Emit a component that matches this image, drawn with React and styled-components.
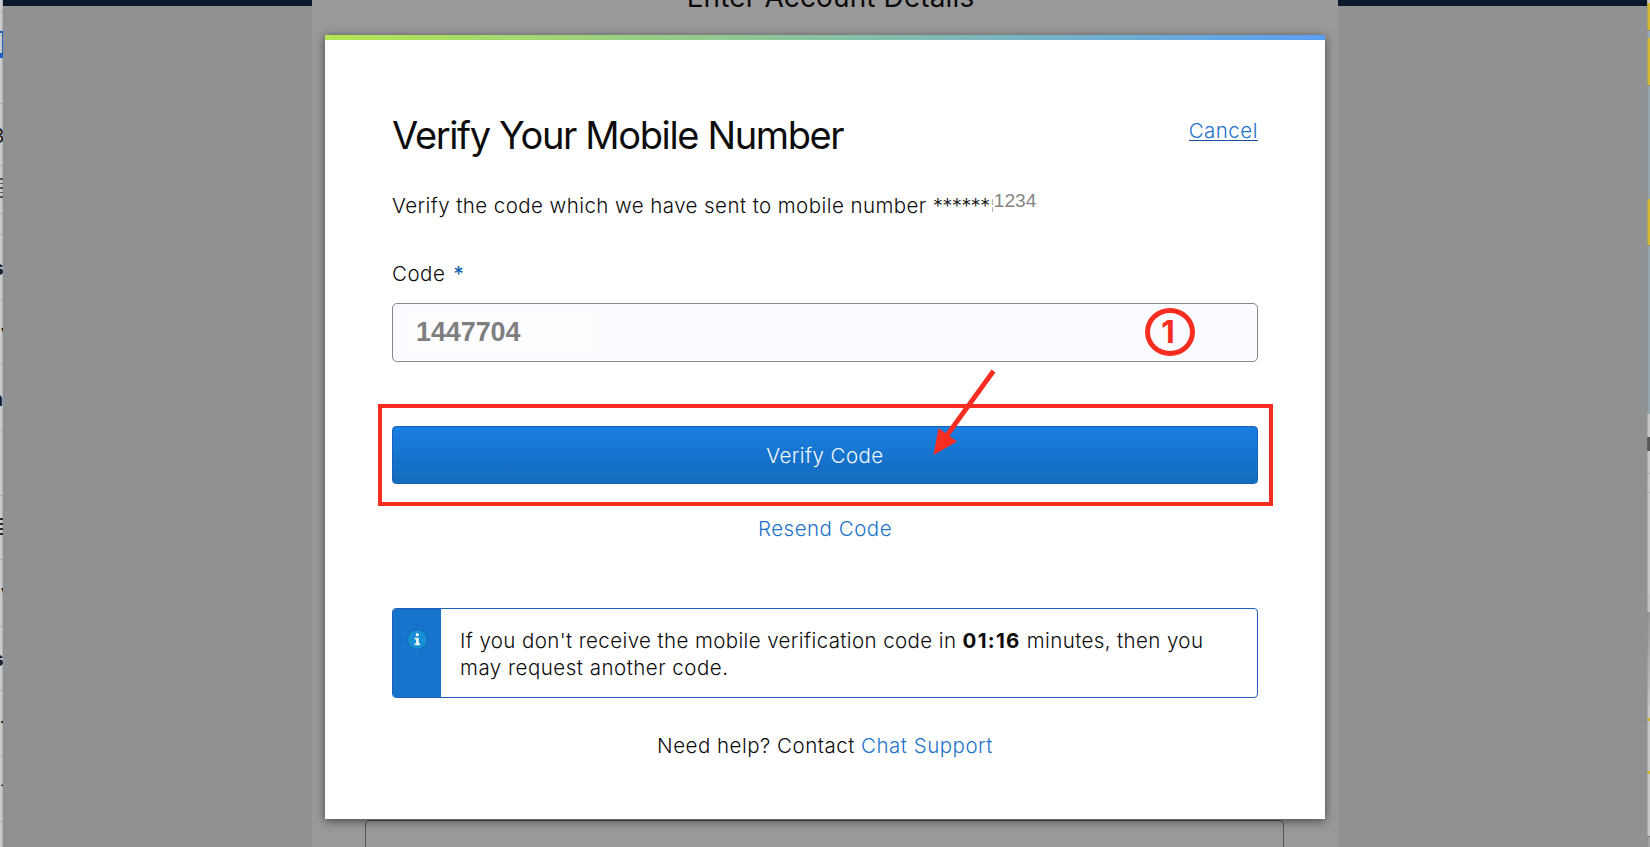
import React from "react";
import styled, { createGlobalStyle } from "styled-components";

const RED = "#f62d20";

const GlobalStyle = createGlobalStyle`
  * { box-sizing: border-box; }
  html, body { margin: 0; padding: 0; }
  body {
    font-family: Inter, "Noto Sans", sans-serif;
    overflow: hidden;
    background: #8f9192;
  }
`;

const Screen = styled.div`
  position: relative;
  display: grid;
  grid-template-columns: 3px 309px minmax(0, 1fr) 309px 3px;
  width: 1650px;
  height: 847px;
  overflow: hidden;
`;

const EdgeStrip = styled.div`
  display: flex;
  flex-direction: column;
  overflow: hidden;
  background: linear-gradient(to right, #c9cbcc 0 2px, #aeb0b2 2px 3px);
`;

const EdgeRow = styled.div`
  flex: none;
  height: ${(p) => p.$h}px;
  padding-top: ${(p) => p.$top || 0}px;
  overflow: hidden;
  border-bottom: 1px solid #a9abae;
  color: #1c1c1e;
  font-size: ${(p) => p.$size || 16}px;
  font-weight: ${(p) => p.$weight || 400};
  line-height: 20px;
  text-indent: ${(p) => p.$shift || 0}px;
  white-space: nowrap;
`;

const FocusedCell = styled.div`
  height: 27px;
  border: solid #1f5fc0;
  border-width: 2px 1px 5px 0;
`;

const ListLines = styled.div`
  height: 20px;
  background: repeating-linear-gradient(to bottom, ${(p) => p.$color} 0 ${(p) => p.$thick}px, transparent ${(p) => p.$thick}px ${(p) => p.$thick + 3}px);
`;

const EdgeSegment = styled.div`
  flex: none;
  height: ${(p) => p.$h}px;
  background: ${(p) => p.$color};
  border-left: 1px solid rgba(120, 125, 130, 0.35);
`;

const Margin = styled.div`
  background: #8f9192;
  border-top: 6px solid #0a182b;
`;

const Sheet = styled.div`
  display: flex;
  flex-direction: column;
  justify-content: space-between;
  align-items: center;
  background: #999;
  overflow: hidden;
`;

const SheetTitle = styled.h1`
  margin: -20px 0 0 11px;
  font-size: 28px;
  font-weight: 400;
  line-height: 34px;
  letter-spacing: 0.12px;
  color: #0b0b0b;
`;

const SheetField = styled.div`
  width: 919px;
  height: 27px;
  margin-right: 1px;
  border: 1px solid #555;
  border-bottom: 0;
  border-radius: 5px 5px 0 0;
`;

const Modal = styled.section`
  position: absolute;
  left: 325px;
  top: 35px;
  width: 1000px;
  height: 784px;
  display: flex;
  flex-direction: column;
  background: #fff;
  box-shadow: 0 2px 9px rgba(0, 0, 0, 0.55);
`;

const Accent = styled.div`
  flex: none;
  height: 5px;
  background: linear-gradient(to right, #b5e550, #5b9ff5);
`;

const Content = styled.div`
  display: flex;
  flex-direction: column;
  padding: 72px 67px 0;
  font-size: 20.5px;
  font-weight: 300;
  line-height: 27px;
  letter-spacing: 0.5px;
  color: #0c0c0c;
`;

const Header = styled.header`
  display: flex;
  justify-content: space-between;
  align-items: flex-start;
  height: 46px;
`;

const Title = styled.h2`
  margin: 0;
  font-size: 38px;
  font-weight: 400;
  line-height: 46px;
  letter-spacing: -1.37px;
  white-space: nowrap;
`;

const Link = styled.a`
  color: #1d72c9;
  text-decoration: none;
`;

const CancelLink = styled(Link)`
  height: 24px;
  margin-top: 5px;
  border-bottom: 1px solid #1d4ba5;
`;

const Intro = styled.p`
  display: flex;
  margin: 34px 0 0;
  letter-spacing: 0.43px;
  white-space: pre;
`;

const Mask = styled.span`
  width: 60px;
  letter-spacing: -0.8px;
`;

const HiddenDigit = styled.span`
  width: 1px;
  height: 13px;
  margin: 7px 1px 0 -1px;
  background: repeating-linear-gradient(to bottom, #b5b5b5 0 6px, #fff 6px 8px);
`;

const PhoneTail = styled.span`
  margin-top: -5px;
  font-family: "Liberation Sans", Arial, sans-serif;
  font-size: 19.2px;
  font-weight: 400;
  letter-spacing: 0;
  color: #858585;
`;

const Label = styled.label`
  margin-top: 41px;
`;

const Required = styled.span`
  margin-left: 8px;
  font-weight: 500;
  color: #165fae;
`;

const CodeInput = styled.div`
  display: flex;
  align-items: center;
  height: 59px;
  margin-top: 16px;
  padding-left: 11px;
  border: 1px solid #878787;
  border-radius: 5px;
  background: #fbfcff;
`;

const CodeValue = styled.span`
  width: 193px;
  height: 45px;
  padding: 0 0 0 12px;
  background: #fdfdff;
  font-family: "Liberation Sans", Arial, sans-serif;
  font-size: 27px;
  font-weight: 700;
  line-height: 44px;
  letter-spacing: -0.1px;
  color: #7f7f7f;
`;

const SubmitButton = styled.button`
  height: 58px;
  margin-top: 64px;
  padding: 0;
  border: 1px solid #1a60b8;
  border-radius: 4px;
  background: linear-gradient(#197ee2, #1572ca 60%, #146cbe);
  font: inherit;
  letter-spacing: 0.43px;
  color: #f1f7fd;
`;

const Resend = styled(Link)`
  align-self: center;
  margin-top: 31px;
`;

const Notice = styled.div`
  display: flex;
  height: 90px;
  margin-top: 66px;
  overflow: hidden;
  border: 1px solid #2160b4;
  border-radius: 4px;
`;

const NoticeSide = styled.div`
  flex: none;
  display: flex;
  justify-content: center;
  width: 48px;
  padding-top: 19px;
  background: #1773cc;
`;

const NoticeText = styled.p`
  margin: 0;
  padding: 18px 0 0 19px;
  white-space: nowrap;
`;

const FirstLine = styled.span`
  letter-spacing: 0.39px;
`;

const Countdown = styled.b`
  font-weight: 700;
  letter-spacing: 1.3px;
`;

const Help = styled.p`
  align-self: center;
  margin: 34px 0 0;
`;

const HighlightFrame = styled.div`
  position: absolute;
  left: 378px;
  top: 404px;
  width: 895px;
  height: 102px;
  border: 4px solid ${RED};
  pointer-events: none;
`;

const StepBadge = styled.div`
  position: absolute;
  left: 1145px;
  top: 308px;
  display: flex;
  justify-content: center;
  width: 50px;
  height: 48px;
  padding-right: 4px;
  border: 5px solid ${RED};
  border-radius: 50%;
  font-size: 31.5px;
  font-weight: 700;
  line-height: 38px;
  color: ${RED};
`;

const Arrow = styled.svg`
  position: absolute;
  left: 928px;
  top: 366px;
  overflow: visible;
`;

function InfoIcon() {
  return (
    <svg width="22" height="23" viewBox="0 0 22 23" aria-hidden="true">
      <circle cx="11.4" cy="11.5" r="10" fill="#188fd3" stroke="#1067b3" strokeWidth="1" />
      <circle cx="11.3" cy="6.7" r="1.6" fill="#fff" />
      <path d="M8.7 9.7h4v5.8h1.4v1.8H8.7v-1.8h1.5v-4H8.7z" fill="#fff" />
    </svg>
  );
}

const LEFT_ROWS = [
  { h: 12 },
  { h: 92, top: 19, cell: true },
  { h: 62, top: 22, text: "3", size: 20, shift: -8 },
  { h: 48, top: 12, lines: { color: "#55575a", thick: 1.5 } },
  { h: 21 },
  { h: 65, top: 24, text: "s", size: 19, weight: 700, shift: -7 },
  { h: 65, top: 22, text: "v", size: 18, weight: 700, shift: 1 },
  { h: 66, top: 24, text: "n", size: 20, weight: 600, shift: -9 },
  { h: 65 },
  { h: 64, top: 22, lines: { color: "#2a2b2d", thick: 2 } },
  { h: 67, top: 22, text: "v", size: 18, weight: 700, shift: 1 },
  { h: 64, top: 23, text: "s", size: 19, weight: 700, shift: -7 },
  { h: 66, top: 20, text: "-", size: 18, weight: 700 },
  { h: 65, top: 18, text: "-", size: 18, weight: 400 },
];

const RIGHT_SEGMENTS = [
  [3, "#c6c8c9"], [27, "#d2b833"], [1, "#8c8f86"], [7, "#97a8b4"], [47, "#d2b833"],
  [1, "#8c8f86"], [113, "#94a5ac"], [46, "#d2b833"], [1, "#8c8f86"], [168, "#94a5ac"],
  [23, "#c6c6c6"], [14, "#555759"], [22, "#c6c6c6"], [1, "#aaacae"], [18, "#c6c6c6"],
  [1, "#aaacae"], [101, "#c6c6c6"], [18, "#c0c1c2"],
  [94, "linear-gradient(#939596, #c0c1c2)"], [12, "#c6c6c6"], [3, "#cdb432"],
  [50, "#c6c6c6"], [3, "#cdb432"], [62, "#c6c6c6"], [1, "#77797b"], [10, "#a0a2a3"],
];

export default function App() {
  return (
    <Screen>
      <GlobalStyle />
      <EdgeStrip>
        {LEFT_ROWS.map((r, i) => (
          <EdgeRow key={i} $h={r.h} $top={r.top} $size={r.size} $weight={r.weight} $shift={r.shift}>
            {r.cell && <FocusedCell />}
            {r.lines && <ListLines $color={r.lines.color} $thick={r.lines.thick} />}
            {r.text}
          </EdgeRow>
        ))}
      </EdgeStrip>
      <Margin />
      <Sheet>
        <SheetTitle>Enter Account Details</SheetTitle>
        <SheetField />
      </Sheet>
      <Margin />
      <EdgeStrip>
        {RIGHT_SEGMENTS.map(([h, color], i) => (
          <EdgeSegment key={i} $h={h} $color={color} />
        ))}
      </EdgeStrip>

      <Modal>
        <Accent />
        <Content>
          <Header>
            <Title>Verify Your Mobile Number</Title>
            <CancelLink>Cancel</CancelLink>
          </Header>
          <Intro>
            <span>Verify the code which we have sent to mobile number </span>
            <Mask>******</Mask>
            <HiddenDigit />
            <PhoneTail>1234</PhoneTail>
          </Intro>
          <Label>
            Code<Required>*</Required>
          </Label>
          <CodeInput>
            <CodeValue>1447704</CodeValue>
          </CodeInput>
          <SubmitButton type="button">Verify Code</SubmitButton>
          <Resend>Resend Code</Resend>
          <Notice>
            <NoticeSide>
              <InfoIcon />
            </NoticeSide>
            <NoticeText>
              <FirstLine>
                If you don't receive the mobile verification code in <Countdown>01:16</Countdown> minutes, then you
              </FirstLine>
              <br />
              may request another code.
            </NoticeText>
          </Notice>
          <Help>
            Need help? Contact <Link>Chat Support</Link>
          </Help>
        </Content>
      </Modal>

      <HighlightFrame />
      <StepBadge>1</StepBadge>
      <Arrow width="70" height="94" viewBox="0 0 70 94" aria-hidden="true">
        <path d="M65.5 5 L17 72" stroke={RED} strokeWidth="4.8" fill="none" />
        <path d="M5.5 89 L10.5 62 L29 75.5 Z" fill={RED} />
      </Arrow>
    </Screen>
  );
}
